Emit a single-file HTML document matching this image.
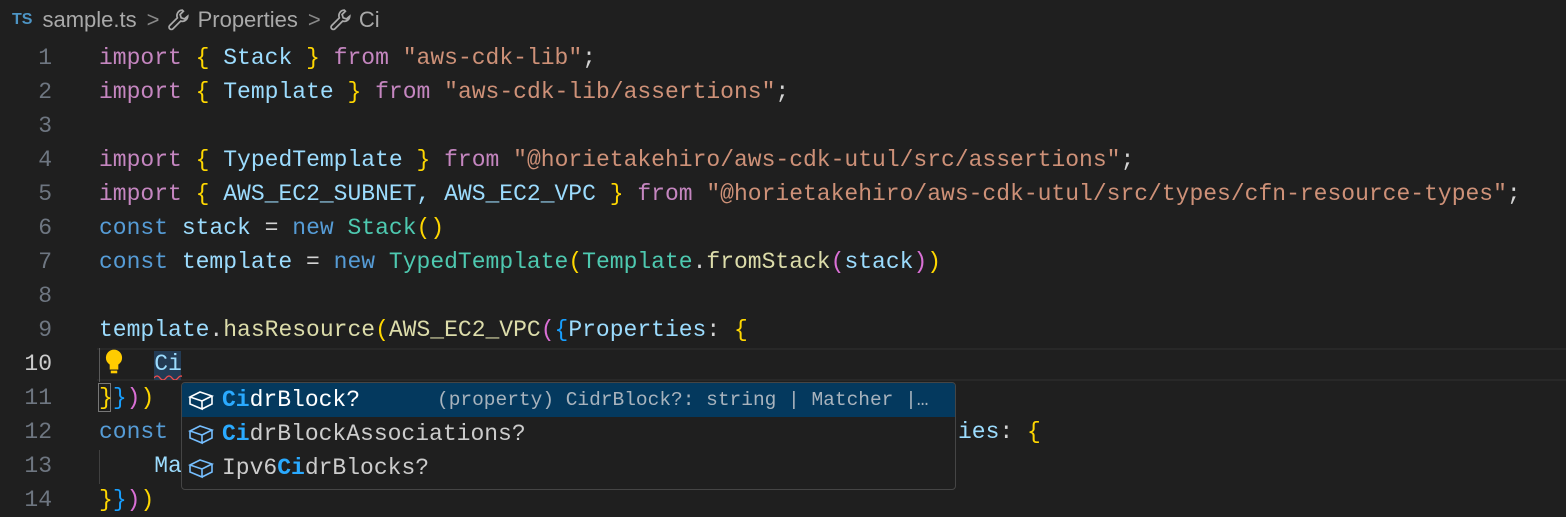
<!DOCTYPE html>
<html><head><meta charset="utf-8"><style>
body{margin:0;width:1566px;height:517px;background:#1f1f1f;overflow:hidden;position:relative;font-family:"Liberation Mono",monospace;}
.bc{position:absolute;top:5px;left:12px;font-family:"Liberation Sans",sans-serif;font-size:22px;color:#a9a9a9;white-space:pre;display:flex;align-items:center;height:30px}
.ts{color:#4d94c4;font-weight:bold;font-size:16px;margin-right:10px}
.sep{color:#888;margin:0 8px 0 10px}
.ln{position:absolute;left:0;width:52px;text-align:right;color:#6e7681;font-size:23px;line-height:34px}
.code{position:absolute;left:99px;font-size:23px;line-height:34px;white-space:pre;color:#9cdcfe}
.k{color:#c586c0}.b1{color:#ffd700}.b2{color:#da70d6}.b3{color:#179fff}.s{color:#ce9178}.c{color:#569cd6}.g{color:#4ec9b0}.f{color:#dcdcaa}.w{color:#d4d4d4}
.cur{position:absolute;left:97px;top:348px;width:1469px;height:33px;border-top:2px solid #282828;border-bottom:2px solid #282828;box-sizing:border-box}
.pop{position:absolute;left:181px;top:382px;width:775px;height:108px;background:#1f1f1f;border:1px solid #454545;border-radius:4px;box-sizing:border-box;overflow:hidden}
.row{height:34px;line-height:34px;font-size:23px;color:#cccccc;white-space:pre;position:relative;padding-left:40px}
.row svg{position:absolute;left:6px;top:5px}
.sel{background:#04395e;color:#fff}
.hl{color:#2aaaff;font-weight:bold}
.det{position:absolute;left:255px;top:0;color:#a8b3bd;font-size:19.5px}
</style></head><body>
<div class="bc"><span class="ts">TS</span>sample.ts<span class="sep">&gt;</span><svg width="24" height="24" viewBox="0 0 22 22" fill="none" stroke="#aaa" stroke-width="1.6"><path d="M14 2a5 5 0 0 0-4.5 7L2.5 16a2 2 0 0 0 3 3l7-7A5 5 0 0 0 19 7.5l-3 2.5-3-1-1-3 3-3z"/></svg> Properties<span class="sep">&gt;</span><svg width="24" height="24" viewBox="0 0 22 22" fill="none" stroke="#aaa" stroke-width="1.6"><path d="M14 2a5 5 0 0 0-4.5 7L2.5 16a2 2 0 0 0 3 3l7-7A5 5 0 0 0 19 7.5l-3 2.5-3-1-1-3 3-3z"/></svg> Ci</div>
<div class="cur"></div>
<div class="ln" style="top:41px">1<br>2<br>3<br>4<br>5<br>6<br>7<br>8<br>9<br><span style="color:#ccc">10</span><br>11<br>12<br>13<br>14</div>
<div style="position:absolute;left:99px;top:348px;width:1px;height:34px;background:#5a5a5a"></div>
<div style="position:absolute;left:99px;top:450px;width:1px;height:34px;background:#404040"></div>
<div style="position:absolute;left:98px;top:383px;width:13px;height:29px;border:1px solid #777;box-sizing:border-box"></div>
<div style="position:absolute;left:154px;top:351px;width:27px;height:29px;background:#264f78;opacity:.6"></div>
<svg style="position:absolute;left:103px;top:348px" width="22" height="28" viewBox="0 0 20 26"><circle cx="10" cy="9" r="7.5" fill="#ffcc00"/><rect x="6" y="13" width="8" height="7" fill="#ffcc00"/><rect x="7" y="21" width="6" height="2.5" fill="#ffcc00"/></svg>
<svg style="position:absolute;left:154px;top:374px" width="28" height="6"><path d="M0 4 Q3 0 6 4 T12 4 T18 4 T24 4 T30 4" stroke="#f14c4c" fill="none" stroke-width="1.3"/></svg>
<div class="code" style="top:41px"><span class="k">import</span> <span class="b1">{</span> Stack <span class="b1">}</span> <span class="k">from</span> <span class="s">"aws-cdk-lib"</span><span class="w">;</span>
<span class="k">import</span> <span class="b1">{</span> Template <span class="b1">}</span> <span class="k">from</span> <span class="s">"aws-cdk-lib/assertions"</span><span class="w">;</span>

<span class="k">import</span> <span class="b1">{</span> TypedTemplate <span class="b1">}</span> <span class="k">from</span> <span class="s">"@horietakehiro/aws-cdk-utul/src/assertions"</span><span class="w">;</span>
<span class="k">import</span> <span class="b1">{</span> AWS_EC2_SUBNET, AWS_EC2_VPC <span class="b1">}</span> <span class="k">from</span> <span class="s">"@horietakehiro/aws-cdk-utul/src/types/cfn-resource-types"</span><span class="w">;</span>
<span class="c">const</span> stack <span class="w">=</span> <span class="c">new</span> <span class="g">Stack</span><span class="b1">()</span>
<span class="c">const</span> template <span class="w">=</span> <span class="c">new</span> <span class="g">TypedTemplate</span><span class="b1">(</span><span class="g">Template</span><span class="w">.</span><span class="f">fromStack</span><span class="b2">(</span>stack<span class="b2">)</span><span class="b1">)</span>

template<span class="w">.</span><span class="f">hasResource</span><span class="b1">(</span><span class="f">AWS_EC2_VPC</span><span class="b2">(</span><span class="b3">{</span>Properties<span class="w">:</span> <span class="b1">{</span>
    Ci
<span class="b1">}</span><span class="b3">}</span><span class="b2">)</span><span class="b1">)</span>
<span class="c">const</span>
    Ma
<span class="b1">}</span><span class="b3">}</span><span class="b2">)</span><span class="b1">)</span></div>
<div class="code" style="top:415px;left:958px">ies<span class="w">:</span> <span class="b1">{</span></div>
<div class="pop">
<div class="row sel"><svg width="26" height="24" viewBox="0 0 26 22" fill="none" stroke="#fff" stroke-width="1.6"><path d="M2 8l10-5 12 4-10 5z M2 8v7l12 5v-8 M14 20l10-5V7"/></svg><span class="hl">Ci</span>drBlock?<span class="det">(property) CidrBlock?: string | Matcher |…</span></div>
<div class="row"><svg width="26" height="24" viewBox="0 0 26 22" fill="none" stroke="#75beff" stroke-width="1.6"><path d="M2 8l10-5 12 4-10 5z M2 8v7l12 5v-8 M14 20l10-5V7"/></svg><span class="hl">Ci</span>drBlockAssociations?</div>
<div class="row"><svg width="26" height="24" viewBox="0 0 26 22" fill="none" stroke="#75beff" stroke-width="1.6"><path d="M2 8l10-5 12 4-10 5z M2 8v7l12 5v-8 M14 20l10-5V7"/></svg>Ipv6<span class="hl">Ci</span>drBlocks?</div>
</div>
</body></html>
